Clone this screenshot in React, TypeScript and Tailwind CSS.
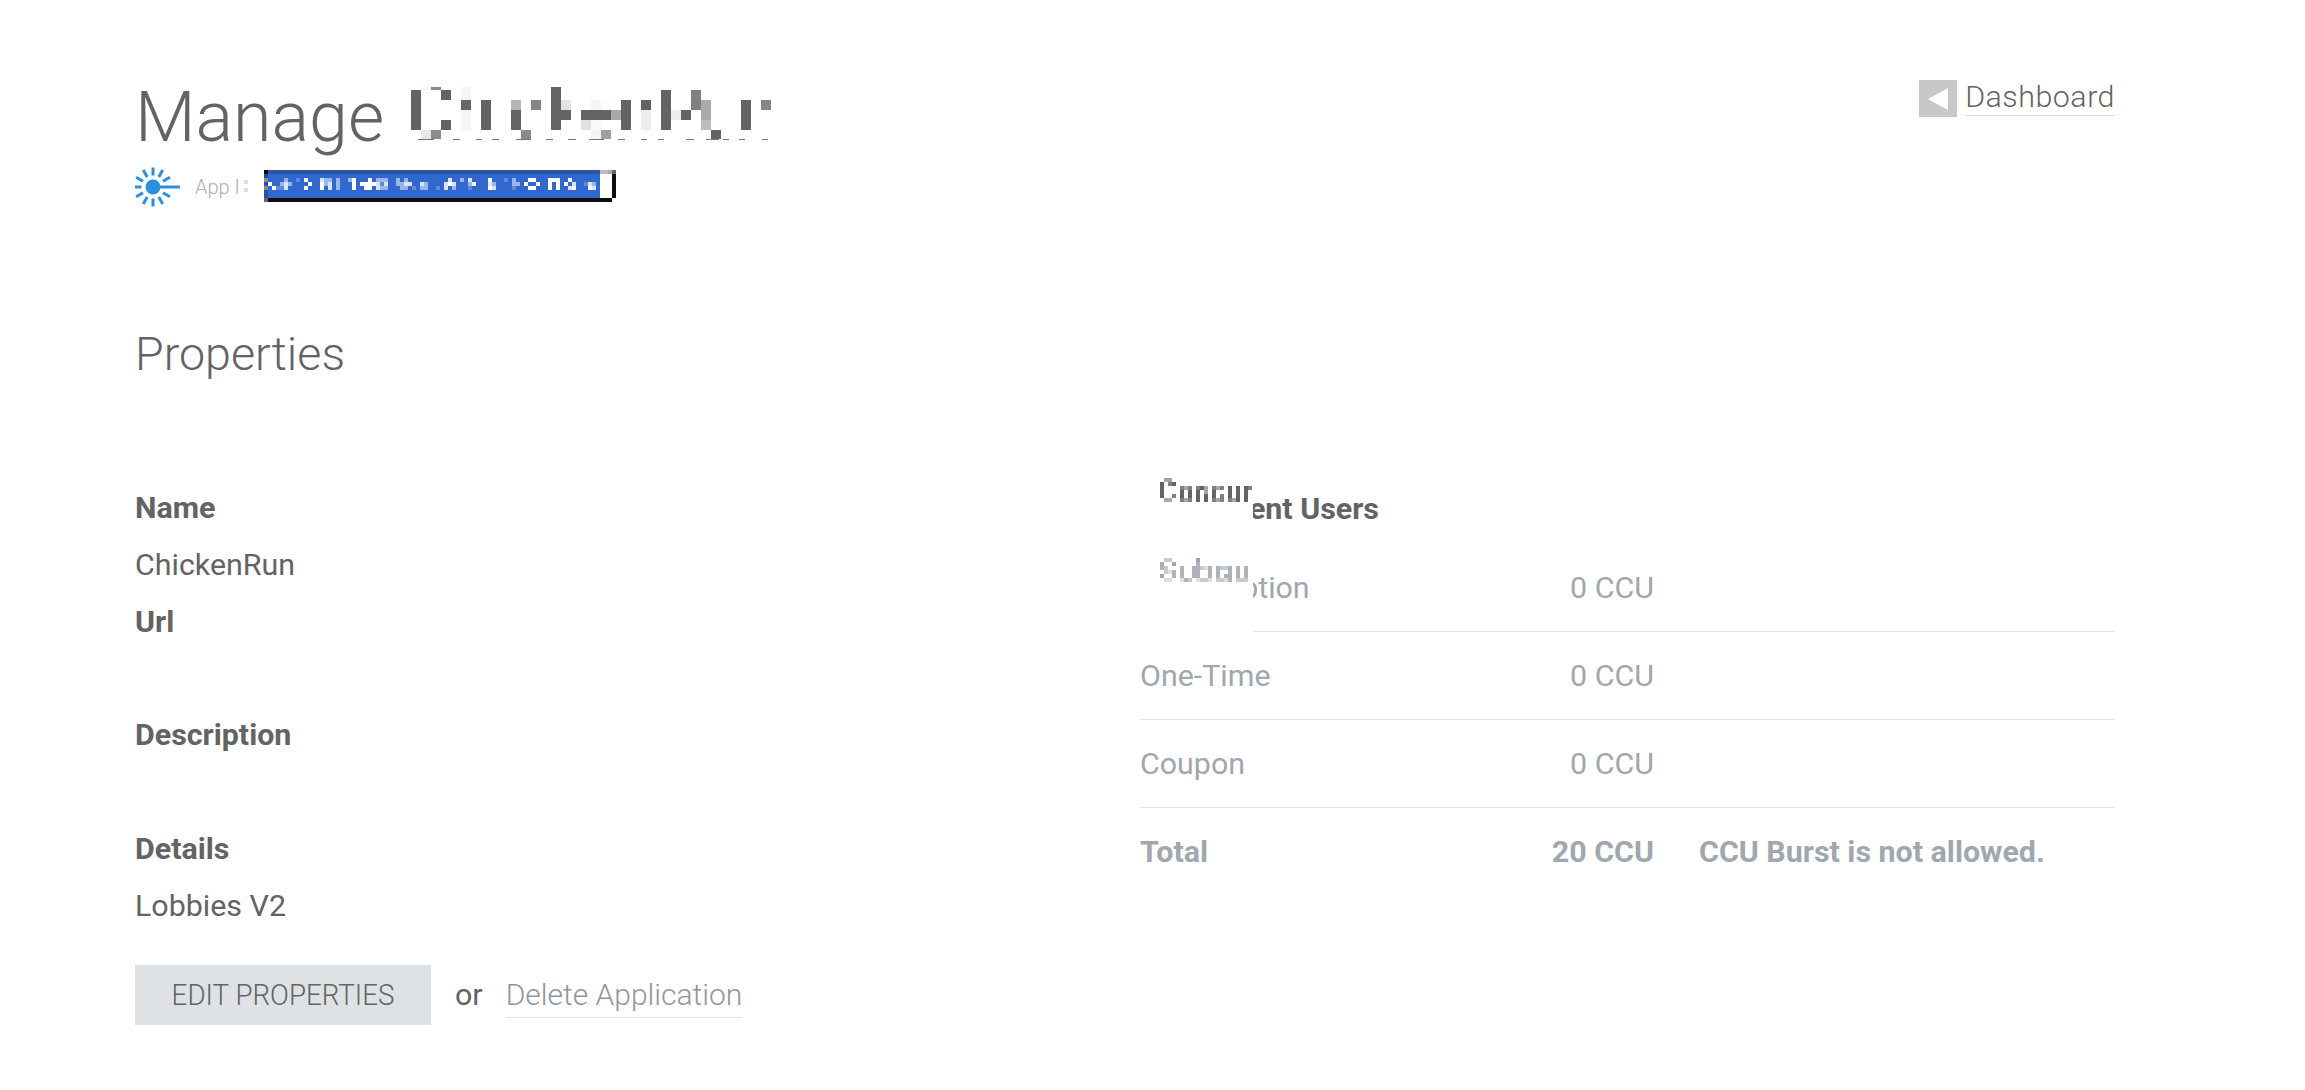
import React from 'react';

const DARK = '#636363';

// pixelated app name: x, y, w, h, colour
const nameBlocks: [number, number, number, number, string][] = [
  [410, 90, 10, 40, DARK], [420, 87, 10, 3, '#f5f5f5'], [430, 87, 10, 3, '#8a8a8a'],
  [440, 90, 10, 10, DARK], [440, 120, 10, 10, DARK], [420, 130, 10, 9, '#e8e8e8'], [430, 130, 10, 9, '#8c8c8c'],
  [460, 87, 10, 13, '#f5f5f5'], [460, 100, 10, 10, '#666666'], [460, 110, 10, 20, '#f5f5f5'],
  [480, 100, 10, 30, DARK], [510, 100, 10, 10, '#b5b5b5'], [510, 110, 10, 20, DARK],
  [530, 100, 10, 10, '#858585'], [520, 130, 10, 9, '#8a8a8a'],
  [550, 87, 10, 43, DARK], [560, 100, 10, 10, '#e4e4e4'], [560, 110, 10, 10, DARK],
  [580, 110, 10, 10, DARK], [580, 120, 10, 10, '#e0e0e0'],
  [590, 100, 10, 10, '#f5f5f5'], [590, 110, 10, 10, DARK], [590, 120, 10, 10, '#f8f8f8'], [590, 130, 10, 9, '#f3f3f3'],
  [600, 100, 10, 10, '#fcfcfc'], [600, 110, 10, 10, DARK], [600, 130, 10, 9, '#a0a0a0'],
  [610, 110, 10, 10, '#a8a8a8'], [620, 100, 10, 30, DARK],
  [640, 100, 10, 10, DARK], [640, 110, 10, 20, '#ededed'],
  [660, 90, 10, 40, DARK], [670, 110, 10, 10, '#eeeeee'], [680, 110, 10, 10, DARK],
  [690, 90, 10, 20, '#808080'], [700, 100, 10, 20, '#aaaaaa'], [700, 120, 10, 10, '#bdbdbd'],
  [710, 130, 10, 9, DARK], [740, 100, 10, 30, DARK], [760, 100, 10, 10, '#868686'],
];

// what is left of the descenders under the pixelated name
const nameDashes: [number, number][] = [
  [417, 16], [452, 7], [475, 6], [491, 7], [515, 15], [545, 7], [567, 8], [588, 15],
  [617, 7], [640, 6], [657, 6], [685, 8], [705, 13], [722, 6], [738, 6], [761, 6],
];

const ID_COLOURS: Record<string, string> = { W: '#ffffff', L: '#dbe4f7', M: '#9ab5e8', D: '#5f8ade' };

const idRows: [number, string][] = [
  [178, '4M 7D 9W 13L 14M 15M 17M 20M 21W 25W 27M 28M 29M 32M 34M 45L 48M 50L 55W 59D 61M 65W 66W 70W 71W 72W 75W'],
  [182, '0W 3M 4L 5M 10W 13W 14M 15L 17M 21W 23W 24W 25W 26W 27L 28D 29L 32M 33M 34L 35L 38L 39M 44L 45W 46L 50M 51W 55L 56M 61M 62M 64W 67W 70W 72W 74W 76L 79D 80L 81M'],
  [186, '1W 2D 3D 4L 9W 13W 15L 17M 21W 24W 25W 27L 28M 29M 33M 34M 36D 38M 39M 42D 44L 46M 50D 55W 56L 61D 65W 66W 70W 72W 75L 76W 80W 81L'],
];

const idEdge: [number, string][] = [
  [170, '#0d0d0d'], [174, '#1e4a9a'], [178, '#8a8a8a'], [182, '#2a4f9f'], [186, '#8a8a8a'], [190, '#2a4f9f'], [194, '#2a4f9f'], [198, '#666666'],
];

function AppIdMosaic() {
  return (
    <svg width="352" height="32" viewBox="264 170 352 32" shapeRendering="crispEdges" className="block">
      <rect x="268" y="170" width="332" height="4" fill="#2b55a5" />
      <rect x="268" y="174" width="332" height="24" fill="#3068d0" />
      <rect x="268" y="198" width="344" height="4" fill="#0d0d0d" />
      <rect x="600" y="170" width="8" height="4" fill="#bbbbbb" />
      <rect x="608" y="170" width="4" height="4" fill="#aaaaaa" />
      <rect x="612" y="170" width="4" height="4" fill="#666666" />
      <rect x="612" y="174" width="4" height="24" fill="#0d0d0d" />
      {idEdge.map(([y, fill]) => (
        <rect key={y} x="264" y={y} width="4" height="4" fill={fill} />
      ))}
      {idRows.map(([y, cells]) =>
        cells.split(' ').map((cell) => (
          <rect
            key={y + cell}
            x={268 + 4 * parseInt(cell)}
            y={y}
            width="4"
            height="4"
            fill={ID_COLOURS[cell.slice(-1)]}
          />
        )),
      )}
    </svg>
  );
}

// one char per 4px cell: 1 is the text colour, 5 almost white
function SmallMosaic({ rows, colours }: { rows: string[]; colours: string[] }) {
  return (
    <svg width="92" height="24" viewBox="0 0 92 24" shapeRendering="crispEdges" className="block">
      {rows.map((row, y) =>
        row.split('').map((c, x) =>
          c === '.' ? null : (
            <rect key={`${x}-${y}`} x={x * 4} y={y * 4} width="4" height="4" fill={colours[Number(c) - 1]} />
          ),
        ),
      )}
    </svg>
  );
}

const concurRows = [
  '.33....................',
  '1.21...................',
  '1....232.213.232.1.1.12',
  '1....1.1.1.3.1...1.1.1.',
  '1..2.1.1.1.1.1.2.1.1.1.',
  '.33..232.1.1.232.231.1.',
];

const subsRows = [
  '.33......1.............',
  '2..1.....2.............',
  '23...2..22342.2332.2.2.',
  '.342.2..22..2.2..2.2.2.',
  '1..2.2..22..2.2.22.2.2.',
  '.44..423.4334.3342.333.',
];

function Sun() {
  const rays = [30, 60, 90, 120, 150, 180, 210, 240, 270, 300, 330];
  return (
    <svg width="46" height="40" viewBox="0 0 46 40" className="mt-[2px] block">
      <circle cx="18" cy="20" r="7.5" fill="#2a8fdc" />
      <line x1="18" y1="20" x2="45" y2="20" stroke="#2a8fdc" strokeWidth="3" />
      {rays.map((a) => (
        <line
          key={a}
          x1="29.5"
          y1="20"
          x2="37.5"
          y2="20"
          stroke="#2a8fdc"
          strokeWidth="3"
          transform={`rotate(${a} 18 20)`}
        />
      ))}
    </svg>
  );
}

const plans = [
  { name: 'One-Time', ccu: '0 CCU' },
  { name: 'Coupon', ccu: '0 CCU' },
];

export default function App() {
  return (
    <div className="min-h-[1090px] bg-white pl-[135px] font-['Roboto',sans-serif] text-[#636363]">
      <div className="w-[1980px]">
        <header className="flex items-start justify-between pt-[70px]">
          <div>
            <div className="flex items-start">
              <h1 className="mt-[7px] h-[80px] text-[70px] leading-[80px] font-light">Manage</h1>
              <svg width="360" height="54" viewBox="410 87 360 54" shapeRendering="crispEdges" className="mt-[17px] ml-[27px] block">
                {nameBlocks.map(([x, y, w, h, fill]) => (
                  <rect key={`${x}-${y}`} x={x} y={y} width={w} height={h} fill={fill} />
                ))}
                {nameDashes.map(([x, w]) => (
                  <rect key={x} x={x} y="139" width={w} height="1" fill="#777777" />
                ))}
              </svg>
            </div>
            <div className="mt-[13px] flex h-[32px] items-center">
              <Sun />
              <div className="mt-[2px] ml-[14px] w-[44px] overflow-hidden text-[20px] leading-[32px] font-light whitespace-nowrap text-[#aab0b5]">
                App ID
              </div>
              <div className="ml-[5px] flex w-[4px] flex-col gap-[4px]">
                <div className="h-[4px] bg-[#dddddd]" />
                <div className="h-[4px] bg-[#dddddd]" />
              </div>
              <div className="ml-[16px]">
                <AppIdMosaic />
              </div>
            </div>
          </div>
          <a className="mt-[10px] flex items-start">
            <span className="flex h-[37px] w-[38px] items-center justify-center bg-[#c8c8c8]">
              <svg width="20" height="22" viewBox="0 0 20 22">
                <path d="M0 11 L20 0 V22 Z" fill="#ffffff" />
              </svg>
            </span>
            <span className="ml-[8px] h-[36px] border-b border-[#dddddd] pt-[1px] text-[30.4px] leading-[32px] font-light tracking-[0.5px]">
              Dashboard
            </span>
          </a>
        </header>

        <h2 className="mt-[122px] text-[46.6px] leading-[60px] font-light">Properties</h2>

        <div className="mt-[96px] grid grid-cols-[1005px_975px]">
          <dl className="text-[30.4px] leading-[56.8px]">
            <dt className="font-bold">Name</dt>
            <dd>ChickenRun</dd>
            <dt className="font-bold">Url</dt>
            <dd className="h-[56.8px]" />
            <dt className="font-bold">Description</dt>
            <dd className="h-[56.8px]" />
            <dt className="font-bold">Details</dt>
            <dd>Lobbies V2</dd>
            <div className="mt-[31px] flex items-center">
              <button className="h-[60px] w-[296px] bg-[#dee2e5] font-light uppercase">
                <span className="inline-block scale-x-[0.913]">Edit Properties</span>
              </button>
              <span className="ml-[24px]">or</span>
              <a className="ml-[23px] border-b border-[#dde1e5] text-[30px] leading-[44px] font-light text-[#8f969e]">
                Delete Application
              </a>
            </div>
          </dl>

          <div className="relative text-[30.4px]">
            <h3 className="h-[64px] leading-[57px] font-bold">Concurrent Users</h3>
            <div className="text-[#a0a7af]">
              <div className="flex h-[88px] items-center border-b border-[#dfe2e6]">
                <span className="w-[409px]">Subscription</span>
                <span className="w-[105px] text-right">0 CCU</span>
              </div>
              {plans.map((p) => (
                <div key={p.name} className="flex h-[88px] items-center border-b border-[#dfe2e6]">
                  <span className="w-[409px]">{p.name}</span>
                  <span className="w-[105px] text-right">{p.ccu}</span>
                </div>
              ))}
              <div className="flex h-[88px] items-center font-bold">
                <span className="w-[409px]">Total</span>
                <span className="w-[105px] text-right whitespace-nowrap">20 CCU</span>
                <span className="ml-[45px] whitespace-nowrap">CCU Burst is not allowed.</span>
              </div>
            </div>

            {/* white patch over the start of the first two lines */}
            <div className="absolute top-[-30px] left-0 h-[183px] w-[113px] bg-white pt-[28px] pl-[20px]">
              <SmallMosaic rows={concurRows} colours={['#636363', '#808080', '#a5a5a5', '#cccccc', '#e6e6e6']} />
              <div className="mt-[56px]">
                <SmallMosaic rows={subsRows} colours={['#a0a7af', '#aeb3b9', '#c6cacf', '#dcdfe2', '#eef0f1']} />
              </div>
            </div>
          </div>
        </div>
      </div>
    </div>
  );
}
